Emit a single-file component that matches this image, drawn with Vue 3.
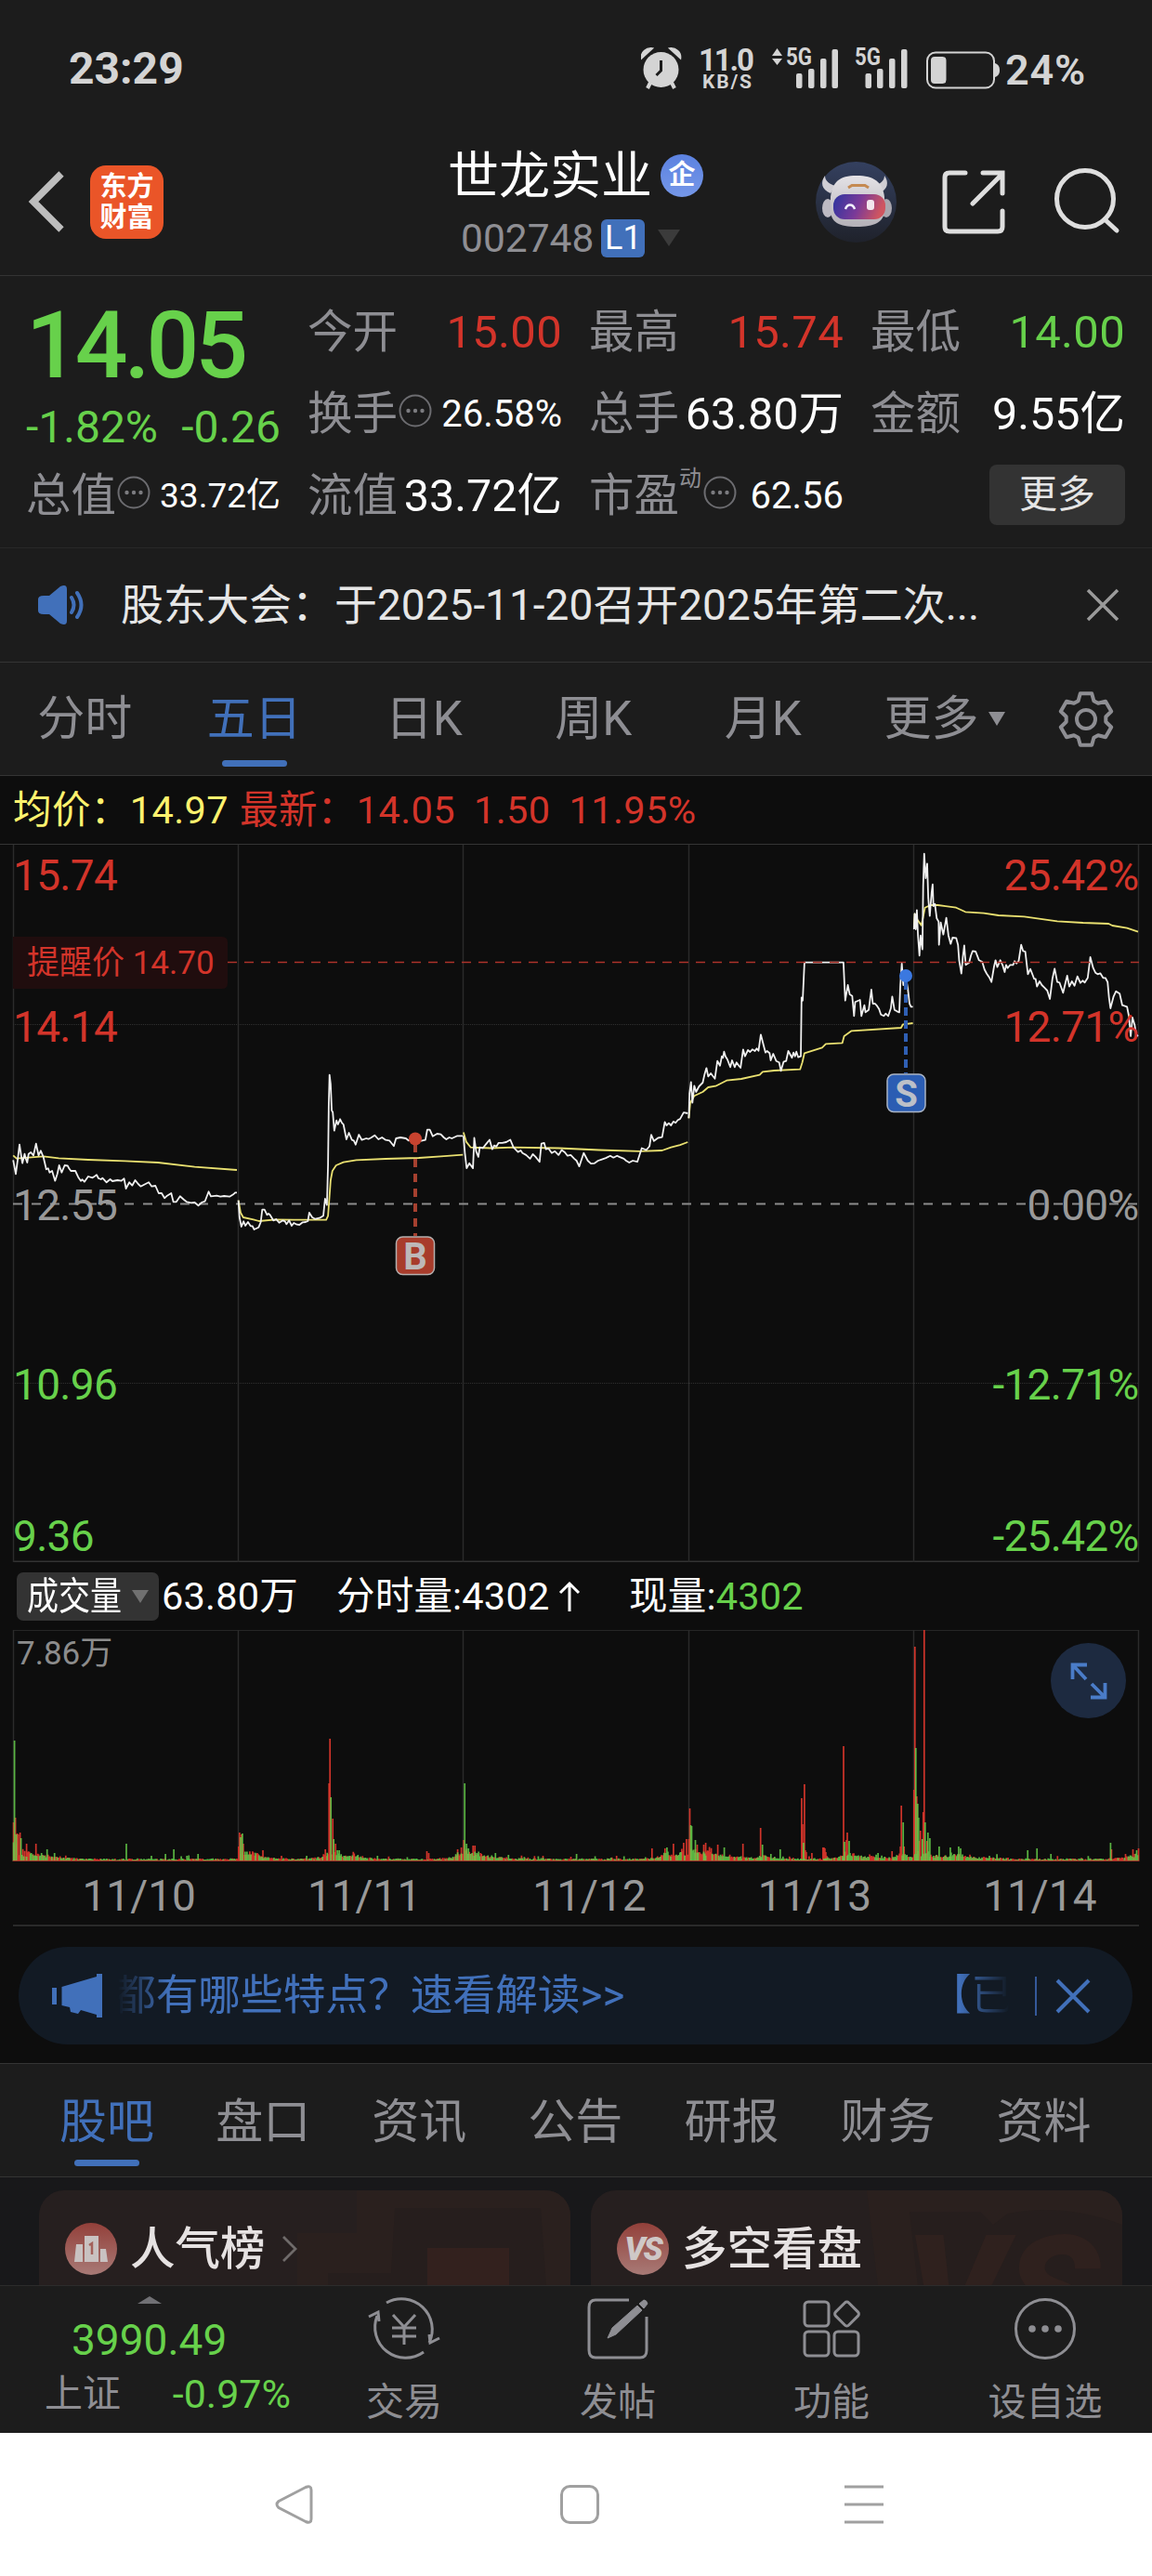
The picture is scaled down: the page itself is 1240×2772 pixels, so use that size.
<template>
  <div class="page">
    <header class="status">
      <span class="clock">23:29</span>
      <svg class="status-icons" width="386" height="68" viewBox="690 40 386 68">
        <g fill="#d4d4d4">
          <ellipse cx="711.500" cy="75" rx="19" ry="19" />
          <path d="M690.500 63c-1-7 5-12 12-11z M732.500 63c1-7-5-12-12-11z" stroke="#d4d4d4" stroke-width="1.500" />
          <path d="M700 89l-3 6M723 89l3 6" stroke="#d4d4d4" stroke-width="4" />
          <path d="M711.500 65v11l-5 5" fill="none" stroke="#1c1c1c" stroke-width="3" />
          <path d="M831 60l5.500-8 5.500 8zM831 63h11l-5.500 7z" />
          <rect x="857" y="79" width="6.500" height="16" rx="2" />
          <rect x="870" y="74" width="6.500" height="21" rx="2" />
          <rect x="883" y="63" width="6.500" height="32" rx="2" />
          <rect x="895.500" y="53" width="6.500" height="42" rx="2" />
          <rect x="931.500" y="79" width="6.500" height="16" rx="2" />
          <rect x="944" y="74" width="6.500" height="21" rx="2" />
          <rect x="957" y="63" width="6.500" height="32" rx="2" />
          <rect x="970" y="53" width="6.500" height="42" rx="2" />
          <rect x="1002" y="61" width="16.500" height="29" rx="4" />
          <path d="M1071 68c3 1 5 3 5 7.500s-2 6.500-5 7.500z" />
        </g>
        <rect x="998" y="56.500" width="72" height="38" rx="9" fill="none" stroke="#d4d4d4" stroke-width="2" />
        <g class="status-text">
          <text x="752" y="75.500" font-size="33" textLength="60">11.0</text>
          <text x="756" y="95" font-size="21" textLength="53">KB/S</text>
          <text x="846" y="70" font-size="25" textLength="28" lengthAdjust="spacingAndGlyphs">5G</text>
          <text x="920" y="70" font-size="25" textLength="28" lengthAdjust="spacingAndGlyphs">5G</text>
        </g>
      </svg>
      <span class="battery">24%</span>
    </header>

    <div class="header">
      <svg class="back" width="44" height="70" viewBox="0 0 44 70">
        <path d="M37 5L7 35l30 30" fill="none" stroke="#bdbdbd" stroke-width="7.500" />
      </svg>
      <div class="logo">东方<br />财富</div>
      <div class="title">
        <div class="name">世龙实业<span class="corp">企</span></div>
        <div class="code">002748<span class="level">L1</span><i class="down"></i></div>
      </div>
      <svg class="head-icons" width="340" height="90" viewBox="876 172 340 90">
        <defs>
          <linearGradient id="avatarBg" x1="0" y1="0" x2="0" y2="1">
            <stop offset="0" stop-color="#34405f" />
            <stop offset="1" stop-color="#1f222b" />
          </linearGradient>
          <linearGradient id="visor" x1="0" y1="0" x2="1" y2="0.200">
            <stop offset="0" stop-color="#2d35a0" />
            <stop offset="0.550" stop-color="#7a3a98" />
            <stop offset="1" stop-color="#cf5560" />
          </linearGradient>
          <linearGradient id="helmet" x1="0" y1="0" x2="0" y2="1">
            <stop offset="0" stop-color="#e4e2e6" />
            <stop offset="1" stop-color="#b4b1b8" />
          </linearGradient>
        </defs>
        <circle cx="921.500" cy="217.500" r="43.500" fill="url(#avatarBg)" />
        <path d="M894 208c-10-4-11-12-6-19 0 6 5 9 11 11zM946 208c10-4 11-12 6-19 0 6-5 9-11 11z" fill="#d0ced4" />
        <ellipse cx="891" cy="224" rx="6" ry="10" fill="#bdbac2" />
        <ellipse cx="954" cy="224" rx="6" ry="10" fill="#a9a6ae" />
        <path d="M894 212c2-16 9-23 28-23s28 7 30 23v14c0 13-11 18-30 18s-28-5-28-18z" fill="url(#helmet)" />
        <path d="M913 202l4-2.500h14l4 2.500" fill="none" stroke="#c58a52" stroke-width="3" />
        <rect x="897" y="209" width="56" height="27" rx="12" fill="url(#visor)" />
        <path d="M910 225c2-6 8-6 10 0" fill="none" stroke="#f2f0ff" stroke-width="2.500" />
        <rect x="933" y="215" width="8" height="11" rx="3" fill="#f2e6ee" />
        <g fill="none" stroke="#dedede" stroke-width="5" stroke-linecap="round">
          <path d="M1039 186h-17q-5 0-5 5v53q0 5 5 5h52q5 0 5-5v-17M1058 186h21v22M1078 188l-31 31" />
          <circle cx="1168" cy="214" r="30.500" />
          <path d="M1189 236l13 12" />
        </g>
      </svg>
    </div>

    <section class="quote">
      <div class="last">
        <div class="price">14.05</div>
        <div class="change"><span>-1.82%</span><span>-0.26</span></div>
      </div>
      <div v-for="item in quotes" :key="item.label" class="cell">
        <span class="label">{{ item.label }}</span>
        <sup v-if="item.sup">{{ item.sup }}</sup>
        <svg v-if="item.more" class="dots" width="36" height="36" viewBox="0 0 36 36">
          <circle cx="18" cy="18" r="16.500" fill="none" stroke="#6c6c70" stroke-width="2" />
          <g fill="#7c7c80">
            <circle cx="10.500" cy="18" r="2.200" />
            <circle cx="18" cy="18" r="2.200" />
            <circle cx="25.500" cy="18" r="2.200" />
          </g>
        </svg>
        <span class="value" :class="[item.tone, item.size]">{{ item.value }}</span>
      </div>
      <div class="cell end"><button class="more-btn">更多</button></div>
    </section>

    <div class="notice">
      <svg width="54" height="44" viewBox="0 0 54 44">
        <path d="M1 16q0-4 6-4h6L25 2q7-3 7 3v34q0 6-7 3L13 32H7q-6 0-6-4z" fill="#4170ba" />
        <path d="M37 14q5 8 0 16M43 9q9 13 0 26" fill="none" stroke="#4170ba" stroke-width="4" stroke-linecap="round" />
      </svg>
      <span class="notice-text">股东大会：于2025-11-20召开2025年第二次...</span>
      <svg width="36" height="36" viewBox="0 0 36 36">
        <path d="M2 2l32 32M34 2L2 34" stroke="#9a9a9a" stroke-width="3.500" />
      </svg>
    </div>

    <nav class="periods">
      <span v-for="p in periods" :key="p" class="period" :class="{ active: p === '五日' }">{{ p }}</span>
      <span class="period wide">更多<i></i></span>
      <svg class="gear" width="62" height="62" viewBox="0 0 62 62">
        <path :d="gearPath" fill="none" stroke="#8e8e93" stroke-width="4" stroke-linejoin="round" />
        <circle cx="31" cy="31" r="10" fill="none" stroke="#8e8e93" stroke-width="4" />
      </svg>
    </nav>

    <section class="chart">
      <div class="legend">
        <span class="avg">均价：14.97</span>
        <span class="latest">最新：<b>14.05</b><b>1.50</b><b>11.95%</b></span>
      </div>

      <svg class="price-chart" width="1240" height="773" viewBox="0 908 1240 773">
        <path d="M0 908.500H1240" stroke="#343434" />
        <path d="M14 1680.500H1226" stroke="#333" stroke-width="2" />
        <path v-for="x in gridX" :key="x" :d="`M${x} 909V1681`" stroke="#2b2b2b" stroke-width="1.500" />
        <path d="M14 1102.500H1226M14 1488.500H1226" stroke="#303030" stroke-dasharray="1 1" />
        <path d="M14 1295.500H1226" stroke="#8c8c8c" stroke-width="1.800" stroke-dasharray="10 10" />
        <path v-for="(d, i) in averageLines" :key="'a' + i" :d="d" class="line" stroke="#e9e070" />
        <path v-for="(d, i) in priceLines" :key="'p' + i" :d="d" class="line" stroke="#f0f0f0" />
        <path d="M245 1035.500H1226" stroke="#ad332b" stroke-width="1.500" stroke-dasharray="10 8" />

        <path d="M14 1008H239q6 0 6 6v44q0 6-6 6H14z" fill="#200d0e" />
        <text x="29" y="1047.500" font-size="35" fill="#d3342a">提醒价 14.70</text>

        <g font-size="46" letter-spacing="-0.700">
          <text v-for="t in axis" :key="t.left" x="14" :y="t.y" :fill="t.color">{{ t.left }}</text>
          <text v-for="t in axis" :key="t.right" x="1225.500" :y="t.y" :fill="t.color" text-anchor="end">{{ t.right }}</text>
        </g>

        <path d="M447 1226V1330" stroke="#a5402f" stroke-width="4" stroke-dasharray="9 7" stroke-dashoffset="-5" />
        <circle cx="447" cy="1225.500" r="7" fill="#c8432f" />
        <rect x="426.500" y="1331" width="41" height="40.500" rx="7" fill="#a83c2b" stroke="#b4afae" stroke-width="1.500" />
        <text x="447" y="1366" font-size="40" font-weight="700" fill="#bdb8b8" text-anchor="middle">B</text>

        <path d="M975 1050V1155" stroke="#2f5fb4" stroke-width="4" stroke-dasharray="9 5" stroke-dashoffset="-6" />
        <circle cx="975" cy="1050" r="7" fill="#3b78e0" />
        <rect x="955" y="1156" width="41" height="40.500" rx="7" fill="#2b5db3" stroke="#aab4c4" stroke-width="1.500" />
        <text x="975.500" y="1191" font-size="40" font-weight="700" fill="#bcc0c8" text-anchor="middle">S</text>
      </svg>

      <div class="vol-legend">
        <button class="vol-btn"><span>成交量</span><i></i></button>
        <span class="vol-total">63.80万</span>
        <span class="vol-minute">分时量:4302<svg width="26" height="36" viewBox="0 0 26 36"><path d="M13 34V4M3 14L13 4l10 10" fill="none" stroke="#fff" stroke-width="3" /></svg></span>
        <span>现量:<b>4302</b></span>
      </div>

      <div class="volume">
        <svg width="1240" height="250" viewBox="0 1754 1240 250">
          <path d="M14 1754.500H1226" stroke="#262626" />
          <path v-for="x in gridX" :key="x" :d="`M${x} 1754V2003`" stroke="#2b2b2b" stroke-width="1.500" />
          <text x="18" y="1791" font-size="35" fill="#8c8c8c">7.86万</text>
          <path :d="volumePaths.up" stroke="#d0342a" stroke-width="1.700" />
          <path :d="volumePaths.down" stroke="#67d14b" stroke-width="1.700" stroke-opacity="0.850" />
          <path d="M14 2002.500H1226" stroke="#a6352a" />
        </svg>
        <div class="expand">
          <svg width="40" height="40" viewBox="0 0 40 40">
            <path d="M2.500 18V2.500H18M3 3l14 15M22 37.500h15.500V22M37 37L23 23" fill="none" stroke="#4a7cc8" stroke-width="3.800" />
          </svg>
        </div>
      </div>
      <div class="dates"><span v-for="d in dates" :key="d">{{ d }}</span></div>

      <div class="promo">
        <svg width="54" height="48" viewBox="0 0 54 48">
          <path d="M0 15h5v18H0zM10.500 14L48 3V0h6v47h-6v-3l-17-5-3 4-8-2-1-5-8.500-2z" fill="#4170ba" />
        </svg>
        <div class="promo-text"><span>都有哪些特点？速看解读&gt;&gt;</span><span>【已</span></div>
        <i class="bar"></i>
        <svg width="38" height="38" viewBox="0 0 38 38">
          <path d="M2 2l34 34M36 2L2 36" stroke="#4170ba" stroke-width="4" />
        </svg>
      </div>
    </section>

    <nav class="sections">
      <span v-for="s in sections" :key="s" :class="{ active: s === '股吧' }">{{ s }}</span>
    </nav>

    <div class="cards">
      <div class="card">
        <svg class="decor" width="572" height="103" viewBox="42 2357 572 103">
          <path d="M384 2357H614V2460H320V2403H384z" fill="#2a201e" />
          <path d="M425 2376H582L588 2460H353V2446H421z" fill="#261e1d" />
          <rect x="460" y="2419" width="88" height="42" fill="#33211e" />
        </svg>
        <div class="badge">
          <svg width="36" height="28" viewBox="0 0 36 28">
            <path d="M2 9h7v19H0zM11 0h15v28H11zM28 14h6l2 14h-8z" fill="#c9c2c1" />
            <path d="M16 10l3-2v12" fill="none" stroke="#a4615b" stroke-width="2.500" />
          </svg>
        </div>
        <span>人气榜</span>
        <svg class="chev" width="18" height="30" viewBox="0 0 18 30">
          <path d="M2 2l13 13L2 28" fill="none" stroke="#6f6b6a" stroke-width="2.800" />
        </svg>
      </div>
      <div class="card">
        <svg class="decor" width="572" height="180" viewBox="636 2357 572 180">
          <path d="M933 2357H1208V2460H945z" fill="#2a201e" />
          <path d="M979 2380h76l14 14 16-12q60-12 123 12v66H988z" fill="#261e1d" />
          <text x="974" y="2525" font-size="168" font-weight="900" font-style="italic" fill="#2f211e">VS</text>
        </svg>
        <div class="badge vs">VS</div>
        <span>多空看盘</span>
      </div>
    </div>

    <footer class="toolbar">
      <div class="index">
        <i></i>
        <div class="points">3990.49</div>
        <div class="index-row"><span>上证</span><em>-0.97%</em></div>
      </div>
      <div class="tool">
        <svg width="78" height="70" viewBox="0 0 78 70">
          <path d="M20 7A33 33 0 0 1 66 50M60 60A33 33 0 0 1 10 21M1 22l10-5 1 10M77 45l-10 5-1-9" />
          <path d="M27 20l12 13 12-13M39 33v19M26 34h26M26 43h26" />
        </svg>
        <span>交易</span>
      </div>
      <div class="tool">
        <svg width="78" height="70" viewBox="0 0 78 70">
          <path d="M51 4H15q-7 0-7 8v46q0 8 7 8h48q7 0 7-8V22" />
          <path d="M28 45l5-11 27-24 5 5-28 26zM62 8l5-4q3 0 4 4l-4 5z" fill="#8e8e93" stroke-width="1" />
        </svg>
        <span>发帖</span>
      </div>
      <div class="tool">
        <svg width="78" height="70" viewBox="0 0 78 70">
          <rect x="10" y="6" width="26" height="26" rx="4" />
          <rect x="10" y="38" width="26" height="26" rx="4" />
          <rect x="42" y="38" width="26" height="26" rx="4" />
          <rect x="45.500" y="9" width="20" height="20" rx="3" transform="rotate(45 55.500 19)" />
        </svg>
        <span>功能</span>
      </div>
      <div class="tool">
        <svg width="78" height="70" viewBox="0 0 78 70">
          <circle cx="39" cy="35" r="31.500" />
          <g fill="#8e8e93" stroke="none">
            <circle cx="25" cy="35" r="3.800" />
            <circle cx="39" cy="35" r="3.800" />
            <circle cx="53" cy="35" r="3.800" />
          </g>
        </svg>
        <span>设自选</span>
      </div>
    </footer>

    <div class="sysnav">
      <svg width="1240" height="60" viewBox="0 2665 1240 60">
        <g fill="none" stroke="#a0a0a0" stroke-width="3">
          <path d="M300 2691.500l29-15q6-2.500 6 3v31q0 5.500-6 3l-29-15q-4-3.500 0-7z" />
          <rect x="604.500" y="2675.500" width="39" height="39" rx="9" />
          <path d="M909 2676H951M909 2695H951M909 2714H951" />
        </g>
      </svg>
    </div>
  </div>
</template>

<script setup>
const quotes = [
  { label: '今开', value: '15.00', tone: 'red' },
  { label: '最高', value: '15.74', tone: 'red' },
  { label: '最低', value: '14.00', tone: 'green' },
  { label: '换手', value: '26.58%', more: true, size: 'mid' },
  { label: '总手', value: '63.80万' },
  { label: '金额', value: '9.55亿' },
  { label: '总值', value: '33.72亿', more: true, size: 'small' },
  { label: '流值', value: '33.72亿' },
  { label: '市盈', value: '62.56', more: true, sup: '动', size: 'mid' },
];

const periods = ['分时', '五日', '日K', '周K', '月K'];
const sections = ['股吧', '盘口', '资讯', '公告', '研报', '财务', '资料'];
const dates = ['11/10', '11/11', '11/12', '11/13', '11/14'];
const gridX = [14.5, 256.5, 498.5, 741.5, 983.5, 1225.5];

const axis = [
  { left: '15.74', right: '25.42%', y: 958, color: '#d3342a' },
  { left: '14.14', right: '12.71%', y: 1121, color: '#d3342a' },
  { left: '12.55', right: '0.00%', y: 1313, color: '#999999' },
  { left: '10.96', right: '-12.71%', y: 1506, color: '#67d14b' },
  { left: '9.36', right: '-25.42%', y: 1669, color: '#67d14b' },
];

// "x,y x,y" samples -> path in chart units
const trace = (samples, ox, oy, sx, sy) =>
  'M' + samples.trim().split(/\s+/).map((s) => {
    const [x, y] = s.split(',').map(Number);
    return `${(ox + x * sx).toFixed(1)} ${(oy + y * sy).toFixed(1)}`;
  }).join('L');

const K = 0.39541;
const V = 1 / 3;

const priceLines = [
  trace(`36,385 43,430 48,385 53,335 57,365 61,395 67,365 70,380 74,393 78,365 84,360 91,370 98,332 105,370 111,355 118,375
    126,415 131,412 135,425 142,420 150,452 156,430 161,402 168,425 176,402 184,403 188,412 193,420 205,420 213,440 220,452 224,448 230,455
    240,438 252,442 258,437 263,433 268,444 275,447 279,443 290,457 300,447 306,453 320,450 330,452 338,445 343,477 352,457 360,467 368,450 376,462 383,470
    395,463 405,457 413,470 423,468 432,492 440,492 448,508 455,500 466,492 472,520 480,520 490,502 500,512 508,520 520,523 530,522 540,532 549,522 558,518 568,487
    574,502 590,500 600,503 610,501 625,503 636,495 640,490 645,490`, 0, 1120, K, V),
  trace(`649,515 652,570 657,600 663,583 668,597 675,585 682,598 687,598 692,609 704,602 710,585 714,545 720,545 727,562 731,558 735,562 744,580
    752,576 760,587 770,580 776,583 780,592 787,580 794,597 800,588 808,593 815,594 824,586 832,585 838,582 842,555 850,570 858,575 870,572 880,565
    885,510 890,530 893,400 895,200 897,110 900,140 903,225 906,230 910,290 916,257 920,270 926,253 931,265 935,270 943,318 950,297
    958,320 963,322 968,335 977,303 985,320 997,315 1003,317 1010,313 1020,305 1030,318 1040,312 1050,320 1060,322 1072,340 1078,315 1090,312 1105,315
    1112,322 1120,320 1135,318 1147,323 1158,320 1163,287 1170,287 1178,308 1190,300 1200,302 1208,312 1215,318 1223,312 1230,315 1245,307 1260,307`, 0, 1120, K, V),
  trace(`39,1280 42,1325 46,1365 52,1352 60,1365 63,1285 67,1320 72,1335 75,1310 82,1312 90,1300 97,1290 103,1315 107,1305 112,1308 117,1298 125,1298 134,1296
    143,1290 150,1310 160,1322 166,1318 170,1325 178,1330 187,1340 193,1328 199,1335 208,1348 212,1300 218,1298 222,1315 228,1313 235,1325 242,1320 250,1330 257,1317 264,1323 270,1332 277,1330
    285,1340 290,1345 296,1360 306,1325 315,1345 322,1353 330,1352 338,1345 345,1342 355,1338 365,1332 372,1337 380,1332 385,1335 395,1340 400,1345 407,1350 415,1345 425,1348 435,1312 445,1317 452,1307 456,1277
    462,1293 471,1285 480,1283 486,1243 490,1252 495,1246 500,1252 505,1242 510,1245 515,1238 520,1235 528,1218 537,1220`, 480, 700, 0.48469, 0.40816),
  trace(`307,1150 309,1070 313,1033 317,1100 322,1045 327,1065 335,1047 345,1035 350,1008 355,988 360,1015 367,1005 378,1022 385,965 392,980 397,950 400,955 403,935
    407,950 412,960 420,985 425,963 432,985 437,970 443,980 448,987 455,928 460,950 468,930 474,936 480,928 487,933 492,925 497,932 503,880 512,920 516,938 520,933 527,940 530,963
    537,942 545,965 553,970 558,997 565,968 572,965 578,933 588,955 592,938 596,950 600,935 605,953 612,950 614,760 617,770 622,647 728,647 731,720 733,770
    740,720 745,750 752,755 757,820 760,775 773,768 777,820 785,785 788,808 797,800 804,735 808,780 814,780 820,788 825,797 830,815 838,820 843,812 850,820 857,795
    861,757 867,800 874,805 880,808 883,720 887,650 891,720 897,690 903,730 908,780 912,790 917,790`, 620, 820, K, V),
  trace(`920,540 922,490 925,540 928,478 931,560 935,625 938,560 943,605 945,400 948,296 952,375 956,328 959,440 963,497 968,420
    971,395 973,465 977,458 982,505 987,515 988,590 993,518 1000,557 1004,530 1008,503 1014,560 1020,587 1025,567 1035,568 1040,590 1043,640
    1049,683 1053,630 1057,592 1061,655 1070,648 1075,625 1080,610 1088,612 1097,640 1106,645 1112,670 1118,683 1125,695 1131,710 1138,660 1142,640 1147,662 1155,640 1161,655 1167,678 1171,655
    1175,665 1182,655 1190,655 1194,643 1199,650 1205,642 1212,590 1217,610 1223,612 1230,685 1237,668 1247,700 1251,700 1255,725 1262,708 1268,720 1275,728 1283,738 1290,765 1297,700 1303,667 1310,710 1316,712
    1326,745 1337,690 1343,725 1350,708 1357,722 1365,692 1373,713 1379,706 1385,712 1393,697 1400,630 1408,665 1414,680 1420,685 1427,682 1435,697 1441,697 1447,710 1451,760 1455,795
    1463,758 1470,740 1480,748 1487,785 1500,790 1505,820 1510,885 1515,825 1521,850 1525,880 1530,885`, 620, 820, K, V),
];

const averageLines = [
  trace('36,370 45,380 118,373 160,379 240,384 340,388 430,393 530,407 645,417', 0, 1120, K, V),
  trace(`649,515 655,555 662,570 690,577 705,582 750,577 800,578 888,578 893,565 897,500 900,450 905,420 915,402 935,392
    970,385 1050,381 1140,378 1200,373 1260,368`, 0, 1120, K, V),
  trace('39,1270 45,1295 55,1310 100,1312 150,1310 250,1312 340,1317 430,1320 480,1318 500,1310 520,1304 537,1296', 480, 700, 0.48469, 0.40816),
  trace(`307,1150 311,1100 322,1078 345,1065 360,1050 380,1046 410,1028 450,1023 500,1010 508,1000 540,996 610,992 616,970
    622,940 670,922 680,910 725,907 730,885 750,868 885,858 890,847 917,843`, 620, 820, K, V),
  trace(`920,535 922,490 930,510 940,527 945,500 950,470 965,462 985,462 1035,470 1060,484 1110,488 1150,495 1220,499
    1310,514 1380,519 1450,522 1460,528 1500,536 1530,548`, 620, 820, K, V),
];

// minute spikes per day: [minute, height, up/down]
const spikes = [
  [[0, 42, 1], [1, 130, 0], [2, 47, 1], [3, 29, 0], [4, 30, 1], [5, 29, 1], [7, 31, 1], [8, 25, 0], [14, 19, 1], [24, 19, 1], [30, 9, 0], [36, 13, 0], [44, 9, 0], [121, 19, 0], [163, 8, 0], [172, 13, 0], [186, 6, 0], [198, 8, 0]],
  [[0, 16, 1], [1, 31, 1], [2, 26, 0], [3, 29, 1], [4, 30, 0], [5, 19, 1], [26, 12, 1], [73, 6, 0], [93, 13, 1], [97, 84, 1], [98, 132, 1], [99, 69, 0], [101, 46, 1], [102, 24, 0], [104, 19, 1], [106, 12, 0], [108, 12, 0], [202, 11, 1], [204, 9, 1], [235, 13, 1], [239, 15, 1]],
  [[0, 23, 1], [1, 84, 0], [3, 19, 0], [5, 14, 0], [10, 17, 1], [12, 17, 1], [34, 9, 0], [85, 6, 1], [121, 8, 0], [202, 14, 1], [216, 14, 1], [218, 15, 0], [225, 19, 1], [236, 20, 1], [239, 24, 1]],
  [[0, 24, 1], [1, 57, 1], [2, 39, 0], [3, 38, 0], [7, 23, 0], [9, 18, 1], [16, 18, 1], [18, 20, 1], [31, 18, 1], [38, 15, 0], [58, 19, 1], [77, 36, 1], [79, 18, 0], [98, 13, 0], [121, 68, 1], [122, 40, 1], [123, 20, 0], [124, 83, 1], [125, 12, 1], [126, 10, 1], [132, 9, 1], [144, 15, 1], [145, 15, 1], [146, 14, 1], [147, 10, 1], [148, 6, 1], [166, 124, 1], [167, 21, 0], [169, 23, 1], [170, 31, 1], [172, 22, 0], [218, 11, 1], [227, 16, 1], [228, 60, 1], [230, 42, 0], [231, 16, 1]],
  [[0, 77, 1], [1, 231, 1], [2, 122, 0], [3, 70, 1], [4, 62, 0], [5, 47, 0], [6, 22, 1], [7, 33, 1], [9, 24, 0], [10, 53, 1], [11, 249, 1], [12, 42, 0], [14, 22, 1], [15, 31, 0], [17, 25, 0], [27, 16, 0], [39, 15, 0], [48, 16, 0], [50, 14, 0], [122, 12, 0], [132, 14, 0], [147, 8, 0], [211, 20, 0], [212, 13, 1], [235, 13, 1], [239, 12, 0], [241, 14, 1]],
];

// busier minutes: [day, centre, peak, falloff]
const humps = [
  [0, 0, 20, 16], [0, 36, 5, 12], [1, 0, 8, 14], [1, 100, 14, 9], [1, 125, 6, 8], [1, 15, 7, 12], [1, 239, 9, 9],
  [2, 0, 12, 16], [2, 15, 5, 18], [2, 239, 13, 13], [2, 216, 9, 5], [3, 0, 13, 25], [3, 20, 7, 18], [3, 172, 11, 8], [3, 229, 8, 8],
  [3, 200, 3, 15], [4, 0, 12, 22], [4, 48, 9, 8], [4, 239, 8, 12], [4, 80, 2.5, 10], [3, 82, 4, 14],
];

const buildVolume = () => {
  let seed = 11;
  const rnd = () => {
    seed = (seed * 1103515245 + 12345) % 2147483648;
    return seed / 2147483648;
  };
  const out = { up: '', down: '' };
  const bar = (day, m, h, up) => {
    const x = (14.6 + day * 242.3 + m * 1.003).toFixed(1);
    out[up ? 'up' : 'down'] += `M${x} 2003V${(2003 - h).toFixed(1)}`;
  };
  spikes.forEach((list, day) => {
    for (let m = 0; m < 241; m++) {
      let h = 1.4 + rnd() * 1.8;
      if (rnd() > 0.93) h += rnd() * 4;
      humps.forEach(([d, c, peak, fall]) => {
        if (d === day) h += peak * Math.exp(-Math.abs(m - c) / fall) * (0.3 + rnd() * 0.7);
      });
      bar(day, m, h, rnd() > 0.5);
    }
    list.forEach(([m, h, up]) => bar(day, m, h, up));
  });
  return out;
};
const volumePaths = buildVolume();

// six-toothed gear outline
const buildGear = () => {
  const pts = [];
  for (let i = 0; i < 6; i++) {
    const a = (i * 60 - 90) * Math.PI / 180;
    [[-0.4, 21.5], [-0.22, 28.5], [0.22, 28.5], [0.4, 21.5]].forEach(([off, r]) => {
      pts.push(`${(31 + r * Math.cos(a + off)).toFixed(1)} ${(31 + r * Math.sin(a + off)).toFixed(1)}`);
    });
  }
  return 'M' + pts.join('L') + 'Z';
};
const gearPath = buildGear();
</script>

<style>
body {
  background: #fff;
}
</style>

<style scoped>
.page {
  width: 1240px;
  height: 2772px;
  overflow: hidden;
  background: #1c1c1c;
  color: #fff;
  font-family: Roboto, "Noto Sans CJK SC", sans-serif;
}
.page * {
  box-sizing: border-box;
}
svg {
  display: block;
  flex: none;
}
i,
em {
  font-style: normal;
}
button {
  border: 0;
  font-family: inherit;
}
.red {
  color: #d3342a;
}
.green {
  color: #67d14b;
}

.status {
  display: flex;
  align-items: center;
  height: 148px;
  padding-left: 74px;
  color: #d4d4d4;
  font-weight: 700;
}
.clock {
  width: 616px;
  font-size: 48px;
  line-height: 148px;
}
.status-text {
  fill: #d4d4d4;
  font-weight: 700;
}
.battery {
  margin-left: 6px;
  padding-top: 2px;
  font-size: 45px;
  font-weight: 600;
  letter-spacing: 0.800px;
}

.header {
  position: relative;
  display: flex;
  align-items: center;
  height: 149px;
  padding: 0 24px 10px 29px;
  border-bottom: 1px solid #343434;
}
.back {
  margin-right: 24px;
}
.logo {
  width: 79px;
  height: 79px;
  padding-top: 7px;
  border-radius: 17px;
  background: #ea5528;
  font-size: 29px;
  font-weight: 700;
  line-height: 33px;
  text-align: center;
}
.title {
  flex: 1;
  padding: 6px 0 0 306px;
}
.name {
  display: flex;
  align-items: center;
  height: 72px;
  font-size: 55px;
  line-height: 72px;
}
.corp {
  width: 46px;
  height: 46px;
  margin-left: 9px;
  border-radius: 50%;
  background: linear-gradient(#5c82e0, #7597e8);
  font-size: 29px;
  font-weight: 700;
  line-height: 45px;
  text-align: center;
}
.code {
  display: flex;
  align-items: center;
  height: 62px;
  padding-left: 14px;
  color: #8e8e93;
  font-size: 42.500px;
}
.level {
  width: 47px;
  height: 41px;
  margin-left: 8px;
  border-radius: 6px;
  background: #4170ba;
  color: #fff;
  font-size: 36px;
  line-height: 41px;
  text-align: center;
}
.down {
  margin-left: 14px;
  border: 12px solid transparent;
  border-top: 18px solid #3b3b3b;
  border-bottom: 0;
}

.quote {
  display: grid;
  grid-template-columns: repeat(4, 274px);
  grid-template-rows: repeat(3, 88px);
  column-gap: 29px;
  height: 293px;
  padding: 17px 0 0 28px;
  border-bottom: 1px solid #282828;
}
.last {
  grid-row: span 2;
  color: #67d14b;
}
.price {
  font-size: 100px;
  font-weight: 500;
  letter-spacing: -4px;
  line-height: 116px;
}
.change {
  display: flex;
  justify-content: space-between;
  font-size: 48px;
  line-height: 60px;
}
.cell {
  display: flex;
  align-items: center;
  line-height: 88px;
}
.cell.end {
  justify-content: flex-end;
}
.label {
  color: #8e8e93;
  font-size: 48.500px;
}
.dots {
  margin: -8px 0 0 1px;
}
sup {
  align-self: flex-start;
  margin: 10px 1px 0 0;
  color: #8e8e93;
  font-size: 24px;
  line-height: 30px;
}
.value {
  margin-left: auto;
  font-size: 48.500px;
}
.value.red,
.value.green {
  font-size: 49px;
  letter-spacing: 0.300px;
}
.value.mid {
  font-size: 40px;
}
.value.small {
  font-size: 37px;
}
.more-btn {
  width: 146px;
  height: 65px;
  margin-top: -4px;
  border-radius: 8px;
  background: #333;
  color: #e5e5e5;
  font-size: 41px;
  line-height: 60px;
}

.notice {
  display: flex;
  align-items: center;
  height: 123px;
  padding: 0 35px 0 40px;
  border-bottom: 1px solid #343434;
}
.notice-text {
  flex: 1;
  padding-left: 36px;
  color: #e6e6e6;
  font-size: 46px;
  line-height: 122px;
}

.periods {
  display: flex;
  align-items: center;
  height: 122px;
  border-bottom: 1px solid #343434;
}
.period {
  position: relative;
  width: 182.500px;
  color: #8e8e93;
  font-size: 51px;
  line-height: 125px;
  text-align: center;
}
.period.wide {
  display: flex;
  align-items: center;
  width: 225px;
  padding-left: 39px;
}
.period.wide i {
  margin-left: 10px;
  border: 9.500px solid transparent;
  border-top: 15px solid #8e8e93;
  border-bottom: 0;
}
.period.active,
.sections .active {
  color: #4170ba;
}
.period.active::after,
.sections .active::after {
  content: "";
  position: absolute;
  bottom: 11px;
  left: 50%;
  width: 70px;
  height: 7px;
  margin-left: -35px;
  border-radius: 4px;
  background: #4170ba;
}

.chart {
  height: 1385px;
  background: #0d0d0d;
}
.chart text {
  font-family: Roboto, "Noto Sans CJK SC", sans-serif;
}
.legend {
  display: flex;
  height: 73px;
  padding-left: 14px;
  font-size: 41.500px;
  letter-spacing: 0.400px;
  line-height: 74px;
  white-space: nowrap;
}
.avg {
  width: 244px;
  color: #fef26e;
}
.latest {
  color: #d3342a;
}
.latest b {
  margin-right: 20px;
  font-weight: 400;
}
.line {
  fill: none;
  stroke-width: 1.800;
  stroke-linejoin: round;
}
.vol-legend {
  display: flex;
  align-items: center;
  height: 73px;
  padding-left: 18px;
  font-size: 41.500px;
  letter-spacing: 0.200px;
  line-height: 75px;
  white-space: nowrap;
}
.vol-btn {
  display: flex;
  align-items: center;
  width: 153px;
  height: 52px;
  padding: 0 0 0 11px;
  border-radius: 7px;
  background: #333;
  color: #fff;
}
.vol-btn span {
  width: 103px;
  font-size: 41px;
  line-height: 52px;
  transform: scaleX(0.830);
  transform-origin: 0 50%;
}
.vol-btn i {
  margin-left: 10px;
  border: 9px solid transparent;
  border-top: 14px solid #707070;
  border-bottom: 0;
}
.vol-total {
  width: 191px;
  padding-left: 3px;
}
.vol-minute {
  display: flex;
  align-items: center;
  width: 315px;
}
.vol-minute svg {
  margin-left: 9px;
}
.vol-legend b {
  color: #67d14b;
  font-weight: 400;
}
.volume {
  position: relative;
  height: 250px;
}
.expand {
  position: absolute;
  top: 14px;
  right: 28px;
  display: flex;
  align-items: center;
  justify-content: center;
  width: 81px;
  height: 81px;
  border-radius: 50%;
  background: #1d2a40;
}
.dates {
  display: flex;
  height: 69px;
  margin: 0 14px;
  border-bottom: 2px solid #2a2a2a;
  color: #999;
  font-size: 46px;
  line-height: 73px;
}
.dates span {
  flex: 1;
  padding-left: 29px;
  text-align: center;
}
.promo {
  display: flex;
  align-items: center;
  height: 105px;
  margin: 22px 21px 0 20px;
  padding: 0 44px 0 36px;
  border-radius: 53px;
  background: #121a24;
  color: #4170ba;
}
.promo-text {
  display: flex;
  justify-content: space-between;
  width: 969px;
  margin-left: 12px;
  font-size: 45.700px;
  line-height: 100px;
  white-space: nowrap;
  -webkit-mask-image: linear-gradient(90deg, transparent 0.500%, #000 6%, #000 94%, transparent 99.500%);
  mask-image: linear-gradient(90deg, transparent 0.500%, #000 6%, #000 94%, transparent 99.500%);
}
.promo .bar {
  width: 2px;
  height: 42px;
  margin: 0 20px 0 23px;
  background: #35599a;
}

.sections {
  display: flex;
  height: 123px;
  padding-left: 31px;
  border-top: 1px solid #343434;
  border-bottom: 1px solid #343434;
}
.sections span {
  position: relative;
  width: 168.100px;
  height: 121px;
  color: #8e8e93;
  font-size: 51px;
  line-height: 125px;
  text-align: center;
}

.cards {
  display: flex;
  gap: 22px;
  height: 116px;
  padding: 14px 0 0 42px;
  overflow: hidden;
  background: #18181a;
}
.card {
  position: relative;
  display: flex;
  width: 572px;
  height: 180px;
  padding: 35px 0 0 28px;
  overflow: hidden;
  border-radius: 27px;
  background: #261f1f;
  color: #e6e2e2;
  font-size: 48.500px;
  font-weight: 500;
  line-height: 57px;
}
.decor {
  position: absolute;
  top: 0;
  left: 0;
}
.card span {
  position: relative;
}
.badge {
  position: relative;
  display: flex;
  align-items: center;
  justify-content: center;
  width: 56px;
  height: 56px;
  margin-right: 14px;
  border-radius: 50%;
  background: linear-gradient(#93403a, #a87a76);
}
.badge.vs {
  color: #cfc8c7;
  font-size: 35px;
  font-style: italic;
  font-weight: 900;
  letter-spacing: -2px;
}
.chev {
  position: relative;
  margin: 13px 0 0 17px;
}

.toolbar {
  display: flex;
  height: 159px;
  border-top: 1px solid #2c2c2c;
  background: #1c1c1c;
}
.index {
  width: 320px;
  color: #67d14b;
}
.index i {
  display: block;
  width: 0;
  margin: 11px 0 0 148px;
  border: 13px solid transparent;
  border-top: 0;
  border-bottom: 8px solid #707074;
}
.points {
  height: 77px;
  padding-left: 77px;
  font-size: 46px;
  line-height: 78px;
}
.index-row {
  display: flex;
  justify-content: space-between;
  padding: 0 7px 0 48px;
  line-height: 40px;
}
.index-row span {
  color: #8e8e93;
  font-size: 41px;
}
.index-row em {
  font-size: 43px;
}
.tool {
  display: flex;
  flex-direction: column;
  align-items: center;
  width: 230px;
  padding-top: 11px;
  color: #8e8e93;
  font-size: 41px;
  line-height: 88px;
}
.tool svg {
  fill: none;
  stroke: #8e8e93;
  stroke-width: 3;
}

.sysnav {
  height: 154px;
  padding-top: 47px;
  background: #fff;
}
</style>
